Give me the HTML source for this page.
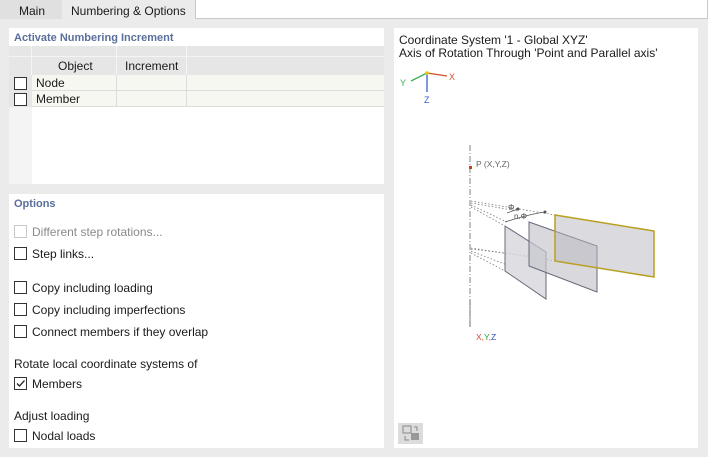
<!DOCTYPE html>
<html><head><meta charset="utf-8"><style>
*{box-sizing:border-box;margin:0;padding:0}
body{width:708px;height:457px;background:#ebebeb;font-family:"Segoe UI","Liberation Sans",sans-serif;font-size:12px;color:#1a1a1a;position:relative;overflow:hidden}
.abs{position:absolute}
.panel{position:absolute;background:#fff}
.title{position:absolute;left:5px;top:4px;color:#5a6f9c;font-weight:bold;font-size:11px}
.cb{position:absolute;width:13px;height:13px;border:1px solid #333;background:#fff}
.lbl{position:absolute;font-size:12px}
</style></head><body>
<div class="abs" style="left:0;top:0;width:62px;height:19px;background:#e0e0e0;"></div>
<div class="abs" style="left:19px;top:4px;">Main</div>
<div class="abs" style="left:62px;top:0;width:133px;height:19px;background:#ebebeb;"></div>
<div class="abs" style="left:71px;top:4px;">Numbering &amp; Options</div>
<div class="abs" style="left:195px;top:0;width:513px;height:19px;background:#fff;border:1px solid #c8c8c8;border-top:none;"></div>

<div class="panel" style="left:9px;top:28px;width:375px;height:156px;">
  <div class="title">Activate Numbering Increment</div>
  <div class="abs" style="left:0;top:18px;width:375px;height:10px;background:#e6e6e6;"></div>
  <div class="abs" style="left:0;top:28px;width:375px;height:19px;background:#e6e6e6;border-top:1px solid #f4f4f4"></div>
  <div class="abs" style="left:22px;top:18px;width:1px;height:29px;background:#f5f5f5"></div>
  <div class="abs" style="left:107px;top:18px;width:1px;height:29px;background:#f5f5f5"></div>
  <div class="abs" style="left:177px;top:18px;width:1px;height:29px;background:#f5f5f5"></div>
  <div class="lbl" style="left:49px;top:31px;">Object</div>
  <div class="lbl" style="left:116px;top:31px;">Increment</div>
  <div class="abs" style="left:0;top:47px;width:23px;height:109px;background:#f4f4f4"></div>
  <div class="abs" style="left:23px;top:47px;width:352px;height:16px;background:#f6f7f1;border-bottom:1px solid #dcdcdc"></div>
  <div class="abs" style="left:23px;top:63px;width:352px;height:16px;background:#f6f7f1;border-bottom:1px solid #dcdcdc"></div>
  <div class="abs" style="left:107px;top:47px;width:1px;height:32px;background:#dcdcdc"></div>
  <div class="abs" style="left:177px;top:47px;width:1px;height:32px;background:#dcdcdc"></div>
  <div class="abs" style="left:0;top:47px;width:23px;height:32px;background:#e6e6e6"></div>
  <div class="cb" style="left:5px;top:49px;"></div>
  <div class="cb" style="left:5px;top:65px;"></div>
  <div class="lbl" style="left:27px;top:48px;">Node</div>
  <div class="lbl" style="left:27px;top:64px;">Member</div>
</div>

<div class="panel" style="left:9px;top:194px;width:375px;height:254px;">
  <div class="title">Options</div>
  <div class="cb" style="left:5px;top:31px;border-color:#c8c8c8"></div>
  <div class="lbl" style="left:23px;top:31px;color:#8a8a8a">Different step rotations...</div>
  <div class="cb" style="left:5px;top:53px;"></div>
  <div class="lbl" style="left:23px;top:53px;">Step links...</div>
  <div class="cb" style="left:5px;top:87px;"></div>
  <div class="lbl" style="left:23px;top:87px;">Copy including loading</div>
  <div class="cb" style="left:5px;top:109px;"></div>
  <div class="lbl" style="left:23px;top:109px;">Copy including imperfections</div>
  <div class="cb" style="left:5px;top:131px;"></div>
  <div class="lbl" style="left:23px;top:131px;">Connect members if they overlap</div>
  <div class="lbl" style="left:5px;top:163px;">Rotate local coordinate systems of</div>
  <div class="cb" style="left:5px;top:183px;"><svg width="11" height="11" style="position:absolute;left:0;top:0"><path d="M2 5.5 L4.5 8 L9.5 2.5" fill="none" stroke="#222" stroke-width="1.3"/></svg></div>
  <div class="lbl" style="left:23px;top:183px;">Members</div>
  <div class="lbl" style="left:5px;top:215px;">Adjust loading</div>
  <div class="cb" style="left:5px;top:235px;"></div>
  <div class="lbl" style="left:23px;top:235px;">Nodal loads</div>
</div>

<div class="panel" style="left:394px;top:28px;width:304px;height:420px;">
  <div class="lbl" style="left:5px;top:5px;">Coordinate System '1 - Global XYZ'</div>
  <div class="lbl" style="left:5px;top:18px;">Axis of Rotation Through 'Point and Parallel axis'</div>
</div>
<svg class="abs" style="left:0;top:0" width="708" height="457" font-family="Liberation Sans, sans-serif">
  <line x1="427" y1="73" x2="447" y2="76" stroke="#d0502a" stroke-width="1.3"/>
  <text x="449" y="80" font-size="9" fill="#d0502a">X</text>
  <line x1="427" y1="73" x2="411" y2="81" stroke="#3cb050" stroke-width="1.3"/>
  <text x="400" y="86" font-size="9" fill="#3cb050">Y</text>
  <line x1="427" y1="73" x2="427" y2="92" stroke="#3a5fc8" stroke-width="1.3"/>
  <text x="424" y="103" font-size="9" fill="#3a5fc8">Z</text>
  <circle cx="427" cy="73" r="1.8" fill="#e8c800"/>
  <line x1="470" y1="145" x2="470" y2="327" stroke="#666" stroke-width="0.8" stroke-dasharray="6,2,1,2"/>
  <line x1="470" y1="300" x2="470" y2="327" stroke="#666" stroke-width="0.8"/>
  <rect x="469" y="166" width="3" height="3" fill="#d04010"/>
  <text x="476" y="167" font-size="8.5" fill="#666">P (X,Y,Z)</text>
  <text x="476" y="340" font-size="8.5" fill="#d05030">X,<tspan fill="#30a040">Y</tspan>,<tspan fill="#3050c0">Z</tspan></text>
  <g stroke="#777" stroke-width="0.8" stroke-dasharray="1.5,2" fill="none">
    <line x1="471" y1="201" x2="555" y2="215"/>
    <line x1="471" y1="203" x2="518" y2="211"/>
    <line x1="471" y1="205" x2="507" y2="222"/>
    <line x1="471" y1="207" x2="505" y2="226"/>
    <line x1="471" y1="248" x2="555" y2="261"/>
    <line x1="471" y1="249" x2="530" y2="256"/>
    <line x1="471" y1="251" x2="507" y2="265"/>
    <line x1="471" y1="253" x2="507" y2="272"/>
  </g>
  <polygon points="505,226 546,252 546,299 505,271" fill="#d8d8de" fill-opacity="0.85" stroke="#6a6a7a" stroke-width="1"/>
  <polygon points="529,222 597,246 597,292 529,266" fill="#c8c8cf" fill-opacity="0.7" stroke="#6a6a7a" stroke-width="1"/>
  <polygon points="555,215 654,231 654,277 555,261" fill="#b8b8c0" fill-opacity="0.5" stroke="#b8a020" stroke-width="1.5"/>
  <path d="M507 213 Q515 210 518 209" stroke="#555" fill="none" stroke-width="0.8"/>
  <path d="M505 222 Q530 214 545 212" stroke="#555" fill="none" stroke-width="0.8"/>
  <circle cx="518" cy="209" r="1.5" fill="#555"/><circle cx="545" cy="212" r="1.5" fill="#555"/>
  <text x="508" y="210" font-size="8" fill="#555">Φ</text>
  <text x="514" y="219" font-size="8" fill="#555">n.Φ</text>
  <rect x="398" y="423" width="25" height="21" fill="#dcdcdc"/>
  <rect x="403" y="426" width="8" height="7" fill="none" stroke="#888" stroke-width="1"/>
  <rect x="411" y="433" width="8" height="7" fill="#999"/>
  <path d="M405 436 v4 h4 M414 427 h3 v4" stroke="#888" fill="none" stroke-width="1"/>
</svg>
</body></html>
